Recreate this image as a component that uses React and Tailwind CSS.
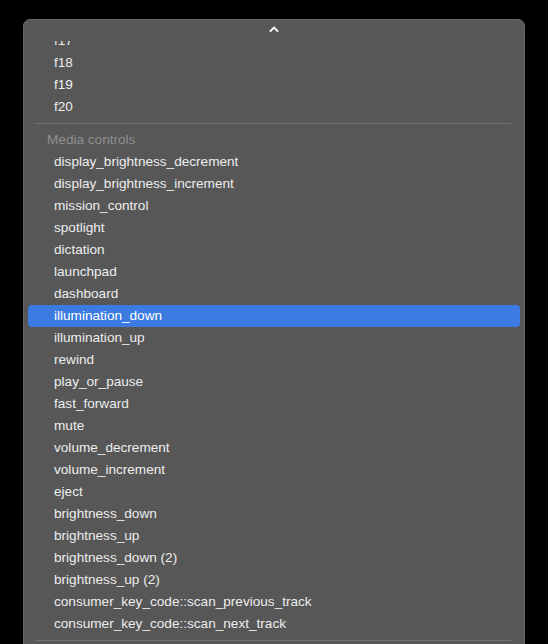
const mediaItems = [
  "display_brightness_decrement",
  "display_brightness_increment",
  "mission_control",
  "spotlight",
  "dictation",
  "launchpad",
  "dashboard",
  "illumination_down",
  "illumination_up",
  "rewind",
  "play_or_pause",
  "fast_forward",
  "mute",
  "volume_decrement",
  "volume_increment",
  "eject",
  "brightness_down",
  "brightness_up",
  "brightness_down (2)",
  "brightness_up (2)",
  "consumer_key_code::scan_previous_track",
  "consumer_key_code::scan_next_track",
];

const selected = "illumination_down";

function Row({ label, active }) {
  return (
    <div
      className={
        "h-[22px] flex items-center pl-[26px] rounded-[4px] " +
        (active ? "bg-[#3b7be2] text-white" : "text-[#ededed]")
      }
    >
      {label}
    </div>
  );
}

function Separator() {
  return (
    <div className="h-[11px] flex items-center pl-[7px] pr-[9px]">
      <div className="h-px w-full bg-[#727272]" />
    </div>
  );
}

export default function App() {
  return (
    <div
      className="w-[548px] h-[644px] bg-black overflow-hidden pt-[19px] pl-[23px]"
      style={{ fontFamily: '"Liberation Sans", Arial, sans-serif' }}
    >
      <div className="w-[502px] h-[640px] bg-[#575757] border border-[#676767] rounded-[7px] overflow-hidden flex flex-col text-[13.6px]">
        <div className="h-[21px] shrink-0 flex items-start justify-center pt-[6px]">
          <svg width="10" height="6" viewBox="0 0 10 6">
            <path d="M1.5 5 L5 1.5 L8.5 5" fill="none" stroke="#f2f2f2" strokeWidth="2" strokeLinecap="round" strokeLinejoin="round" />
          </svg>
        </div>
        <div className="flex-1 overflow-hidden px-[4px]">
          <div className="-mt-[11px]">
            {["f17", "f18", "f19", "f20"].map((f) => (
              <Row key={f} label={f} />
            ))}
            <Separator />
            <div className="h-[22px] flex items-center pl-[19px] text-[#8f8f8f]">Media controls</div>
            {mediaItems.map((item) => (
              <Row key={item} label={item} active={item === selected} />
            ))}
            <Separator />
          </div>
        </div>
      </div>
    </div>
  );
}
